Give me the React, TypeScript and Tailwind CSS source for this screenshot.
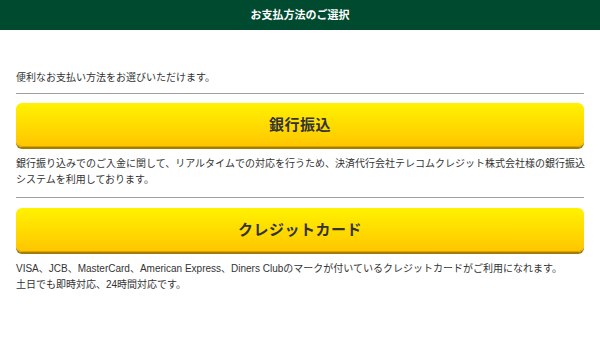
import React from "react";

const font = { fontFamily: '"Liberation Sans", "Noto Sans CJK JP", sans-serif' };

function YellowButton({ label }: { label: string }) {
  return (
    <button
      type="button"
      className="w-full h-[44px] rounded-[6px] bg-gradient-to-b from-[#fff200] to-[#ffc600] shadow-[0_2px_0_#a57c00] border-b border-[#d9a400] flex items-center justify-center text-[15px] font-bold text-[#333333] tracking-[0.5px]"
    >
      {label}
    </button>
  );
}

export default function App() {
  return (
    <div className="w-[600px] h-[353px] bg-white overflow-hidden" style={font}>
      <header className="h-[30px] bg-[#004a2f] flex items-center justify-center">
        <h1 className="text-white text-[11px] font-bold">お支払方法のご選択</h1>
      </header>
      <main className="px-4 text-[10px] leading-[16px] text-[#333333]">
        <p className="mt-[40px]">便利なお支払い方法をお選びいただけます。</p>
        <hr className="mt-[7px] border-0 h-px bg-[#a0a0a0]" />
        <div className="mt-[9px]">
          <YellowButton label="銀行振込" />
        </div>
        <p className="mt-[9px] whitespace-nowrap">
          銀行振り込みでのご入金に関して、リアルタイムでの対応を行うため、決済代行会社テレコムクレジット株式会社様の銀行振込
          <br />
          システムを利用しております。
        </p>
        <hr className="mt-[9px] border-0 h-px bg-[#a0a0a0]" />
        <div className="mt-[10px]">
          <YellowButton label="クレジットカード" />
        </div>
        <p className="mt-[9px]">
          VISA、JCB、MasterCard、American Express、Diners Clubのマークが付いているクレジットカードがご利用になれます。
          <br />
          土日でも即時対応、24時間対応です。
        </p>
      </main>
    </div>
  );
}
